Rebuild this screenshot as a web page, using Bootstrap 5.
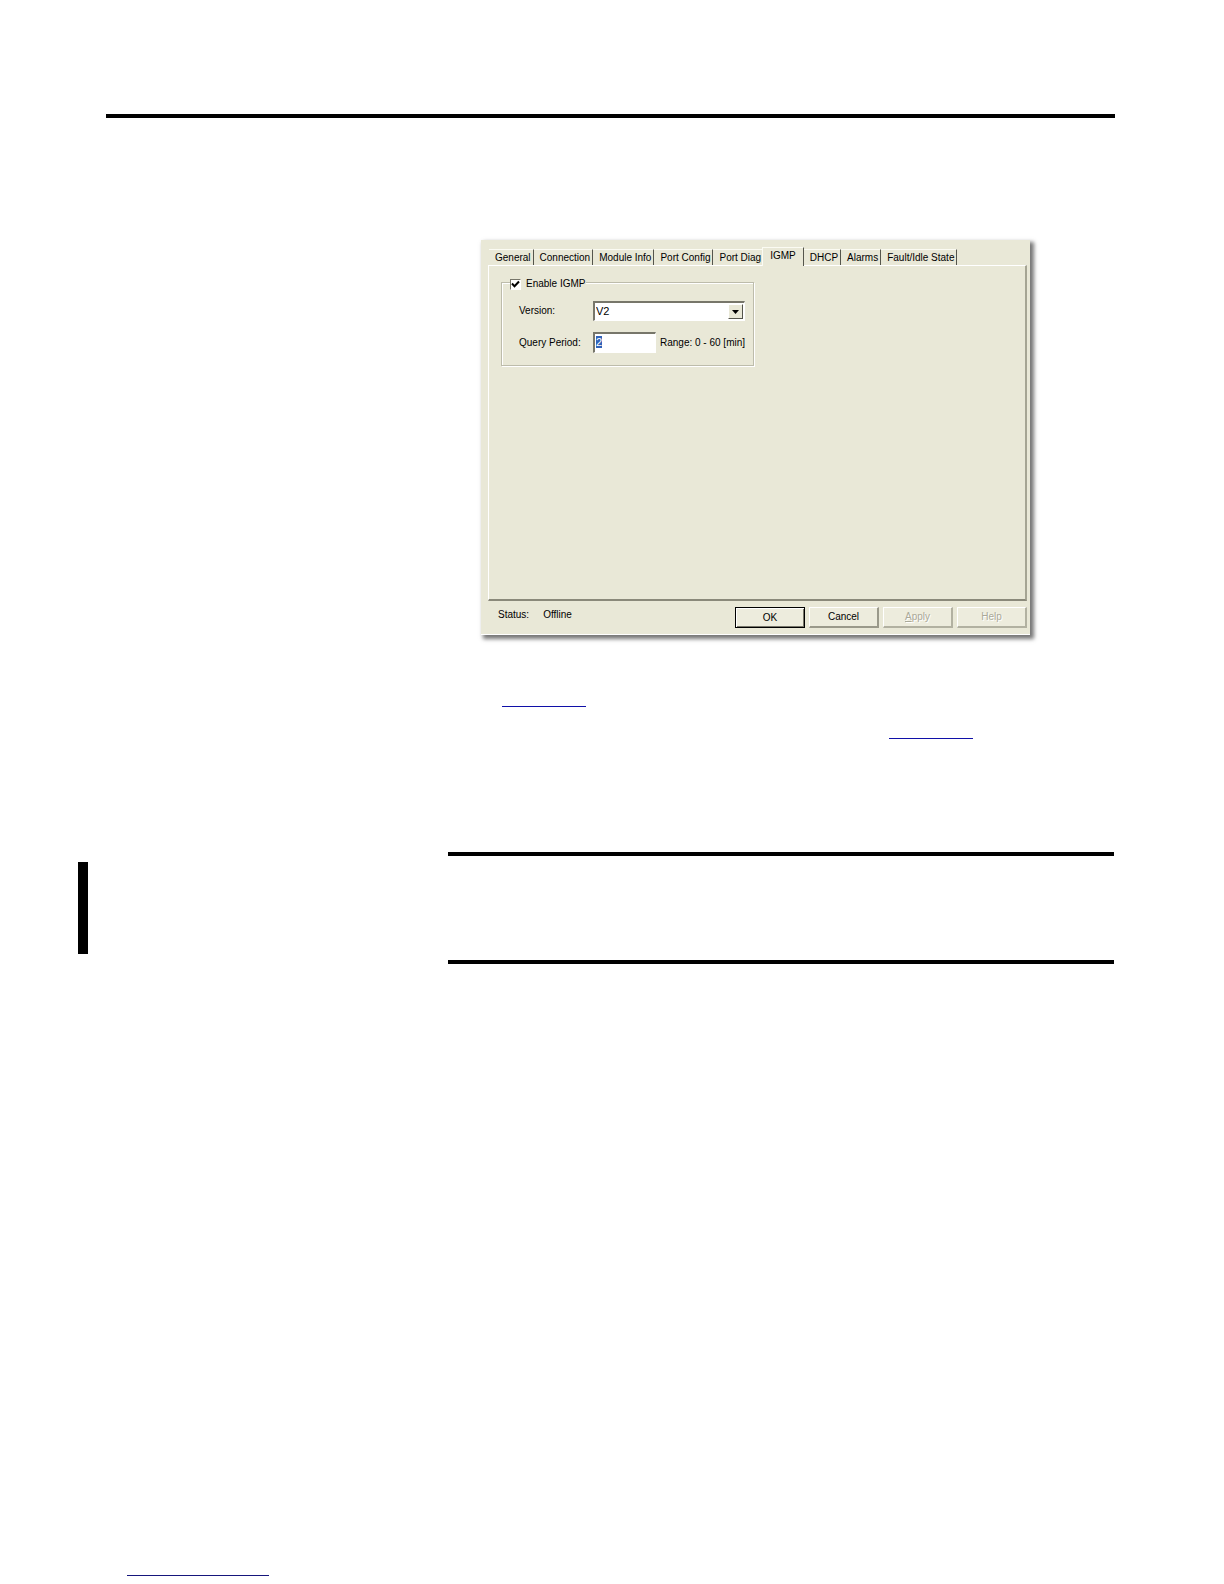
<!DOCTYPE html>
<html lang="en">
<head>
<meta charset="utf-8">
<meta name="viewport" content="width=device-width, initial-scale=1">
<title>Module Properties - IGMP</title>
<link href="https://cdn.jsdelivr.net/npm/bootstrap@5.3.0/dist/css/bootstrap.min.css" rel="stylesheet">
<style>
  body { font-family: "Liberation Sans", Arial, sans-serif; background: #fff; color: #000; }
  .sheet { padding: 114px 109px 8px 106px; }
  .rule { border: 0; border-top: 4px solid #000; opacity: 1; margin: 0; }
  .content { margin-left: 342px; padding-top: 122px; }
  .dialog-box {
    width: 549px; margin-left: 33px; padding: 7px 3px 6px 7px;
    background: #e9e8d7; font-size: 10px; line-height: 12px;
    border-bottom: 1px solid #fff;
    box-shadow: 3px 3px 4px 1px #777;
  }
  .tab-strip { height: 18px; padding-left: 1px; }
  .tab-strip button {
    height: 16px; padding: 0 2px 0 6px; border: 0; border-top: 1px solid #fbfbf3;
    border-right: 1px solid #55554c; background: #e9e8d7; color: #000; white-space: nowrap;
  }
  .tab-strip button.active {
    height: 19px; padding: 0 7px 2px 7px; margin: 0 0 -1px -2px; z-index: 1;
    border-left: 1px solid #fbfbf3; position: relative;
  }
  .tab-page {
    height: 336px; padding: 16px 12px;
    border: 1px solid #fff; border-right: 2px solid #a5a493; border-bottom: 2px solid #8a897a;
  }
  .group {
    width: 253px; height: 84px; padding: 0 7px 0 17px;
    border: 1px solid #bdbcab; box-shadow: 1px 1px #fff, inset 1px 1px #fff;
  }
  .group-title { width: 76px; height: 12px; margin: -5px 0 0 -9px; background: #e9e8d7; gap: 5px; white-space: nowrap; }
  .tick {
    appearance: none; width: 11px; height: 11px; margin: 0; border: 1px solid #77766a;
    border-right-color: #fff; border-bottom-color: #fff;
    background: #fff url("data:image/svg+xml,%3Csvg xmlns='http://www.w3.org/2000/svg' viewBox='0 0 9 9'%3E%3Cpath d='M1 3.5l2.5 2.8L8 1.5' fill='none' stroke='%23000' stroke-width='2'/%3E%3C/svg%3E") center / 9px 9px no-repeat;
  }
  .field-label { flex: none; width: 74px; white-space: nowrap; }
  .field-row { margin-top: 11px; }
  .sunken {
    border: 1px solid #77766a; border-width: 2px 1px 1px 2px;
    border-right-color: #fff; border-bottom-color: #fff; border-radius: 0;
    background: #fff; color: #000; outline: 0;
  }
  .combo { width: 152px; height: 20px; }
  .combo select { appearance: none; width: 100%; height: 100%; border: 0; padding: 0 0 1px 1px; background: transparent; font-size: 11px; outline: 0; }
  .combo-arrow {
    right: 1px; top: 1px; bottom: 1px; width: 15px; background: #e9e8d7; pointer-events: none;
    border: 1px solid #fff; border-right-color: #55554c; border-bottom-color: #55554c;
  }
  .period { width: 63px; height: 21px; padding: 0 0 3px 1px; font-size: 11px; }
  .period::selection { background: #2f62b8; color: #fff; }
  .push {
    width: 70px; height: 21px; padding: 0; background: #edecdd; color: #000; border-radius: 0;
    border: 1px solid #fff; border-right: 2px solid #9a998a; border-bottom: 2px solid #9a998a;
  }
  .push.default { border: 1px solid #000; box-shadow: inset 1px 1px #fff, inset -1px -1px #77766a; }
  .push:disabled { color: #aaa998; border-right-color: #b2b1a1; border-bottom-color: #b2b1a1; text-shadow: 1px 1px #fff; }
  .footer-row { padding: 6px 0 0 10px; }
  .status-text { gap: 14px; padding-top: 2px; }
  .ref-link { display: block; height: 1px; width: 84px; background: #1010a8; }
  .ref-first { margin: 71px 0 0 54px; }
  .ref-second { margin: 31px 0 0 441px; }
  .note-row { margin-top: 123px; }
  .change-bar { width: 10px; height: 92px; margin-left: -28px; background: #000; }
  .note-box { height: 112px; margin: -10px 1px 0 360px; border-top: 4px solid #000; border-bottom: 4px solid #000; }
  .site-link { width: 142px; margin-left: 21px; background: #16167c; }
</style>
<script src="https://cdn.jsdelivr.net/npm/bootstrap@5.3.0/dist/js/bootstrap.bundle.min.js" defer></script>
</head>
<body>
<div class="sheet d-flex flex-column min-vh-100">
  <hr class="rule">
  <main>
    <div class="content">
      <form class="dialog-box">
        <div class="tab-strip d-flex align-items-end" role="tablist">
          <button type="button" role="tab">General</button>
          <button type="button" role="tab">Connection</button>
          <button type="button" role="tab">Module Info</button>
          <button type="button" role="tab">Port Config</button>
          <button type="button" role="tab">Port Diag</button>
          <button type="button" role="tab" class="active" aria-selected="true">IGMP</button>
          <button type="button" role="tab">DHCP</button>
          <button type="button" role="tab">Alarms</button>
          <button type="button" role="tab">Fault/Idle State</button>
        </div>
        <div class="tab-page" role="tabpanel">
          <div class="group">
            <div class="group-title d-flex align-items-center">
              <input class="tick" type="checkbox" id="enable" checked>
              <label for="enable">Enable IGMP</label>
            </div>
            <div class="field-row d-flex align-items-center">
              <label class="field-label" for="version">Version:</label>
              <div class="combo sunken position-relative">
                <select id="version"><option>V2</option></select>
                <span class="combo-arrow position-absolute d-flex align-items-center justify-content-center">
                  <svg width="7" height="4" viewBox="0 0 7 4"><path d="M0 0h7L3.500 4z"/></svg>
                </span>
              </div>
            </div>
            <div class="field-row d-flex align-items-center">
              <label class="field-label" for="period">Query Period:</label>
              <input class="period sunken" type="text" id="period" value="2">
              <span class="ms-1 text-nowrap">Range: 0 - 60 [min]</span>
            </div>
          </div>
        </div>
        <div class="footer-row d-flex">
          <div class="status-text d-flex">
            <span>Status:</span>
            <span>Offline</span>
          </div>
          <div class="d-flex ms-auto gap-1">
            <button type="button" class="push default">OK</button>
            <button type="button" class="push">Cancel</button>
            <button type="button" class="push" disabled><u>A</u>pply</button>
            <button type="button" class="push" disabled>Help</button>
          </div>
        </div>
      </form>
      <a class="ref-link ref-first" href="#" aria-label="Page reference"></a>
      <a class="ref-link ref-second" href="#" aria-label="Page reference"></a>
    </div>
    <div class="note-row d-flex align-items-start">
      <div class="change-bar"></div>
      <div class="note-box flex-grow-1"></div>
    </div>
  </main>
  <footer class="mt-auto"><a class="ref-link site-link" href="#" aria-label="Publisher site"></a></footer>
</div>
<script>
  const period = document.getElementById('period');
  period.focus({ preventScroll: true });
  period.select();
</script>
</body>
</html>
